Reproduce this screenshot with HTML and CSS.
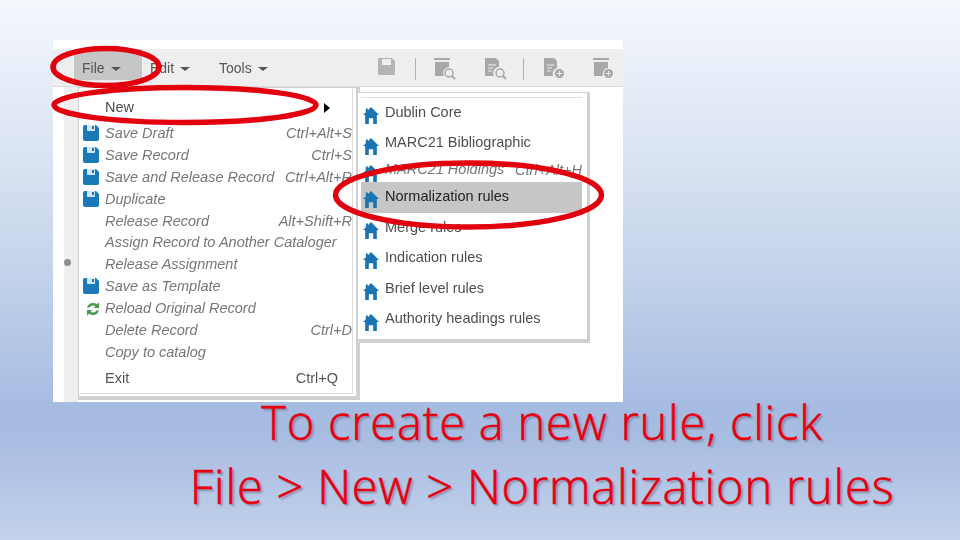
FILE: index.html
```html
<!DOCTYPE html>
<html lang="en">
<head>
<meta charset="utf-8">
<title>To create a new rule</title>
<link rel="stylesheet" href="styles.css">
</head>
<body>
<svg class="defs" width="0" height="0" aria-hidden="true">
  <symbol id="floppy" viewBox="0 0 16 16">
    <path fill="#1a7ab8" d="M2 0h11l3 3v11a2 2 0 0 1-2 2H2a2 2 0 0 1-2-2V2a2 2 0 0 1 2-2z"/>
    <path fill="#d5e6f2" d="M4 0h8v5a1 1 0 0 1-1 1H5a1 1 0 0 1-1-1z"/>
    <rect fill="#1a7ab8" x="9" y="1" width="2" height="3"/>
  </symbol>
  <symbol id="house" viewBox="0 0 17 18">
    <path fill="#1a74b2" d="M8.500 0 17 8.600h-2.300V18h-3.900v-6H6.200v6H2.300V8.600H0L3 5.600V1.500h2.200v1.900z"/>
  </symbol>
  <symbol id="reload" viewBox="0 0 16 16">
    <path fill="#4c9a50" d="M2 6.500C3 3 6 1.500 9 2c1.200.2 2 .7 2.800 1.300L14 1.500V7H8.500l2-1.800C9.700 4.600 9 4.400 8 4.500c-1.500.1-2.800 1-3.300 2z"/>
    <path fill="#4c9a50" d="M14 9.500c-1 3.500-4 5-7 4.500-1.200-.2-2-.7-2.800-1.300L2 14.500V9h5.500l-2 1.800c.8.600 1.500.8 2.500.7 1.500-.1 2.800-1 3.300-2z"/>
  </symbol>
  <symbol id="tb-save" viewBox="0 0 17 17">
    <path fill="#b4b4b4" d="M1 0h13l3 3v13a1 1 0 0 1-1 1H1a1 1 0 0 1-1-1V1a1 1 0 0 1 1-1z"/>
    <rect fill="#efefef" x="4" y="1" width="9" height="6"/>
  </symbol>
  <symbol id="tb-box" viewBox="0 0 22 22">
    <rect fill="#a8a8a8" x="0" y="0" width="16" height="2"/>
    <path fill="#a8a8a8" d="M1 4h14v5a6 6 0 0 0-5 9H1z"/>
    <circle cx="15" cy="15" r="4" fill="none" stroke="#a8a8a8" stroke-width="1.500"/>
    <path stroke="#a8a8a8" stroke-width="2" d="m18 18 3 3"/>
  </symbol>
  <symbol id="tb-doc" viewBox="0 0 22 22">
    <path fill="#a8a8a8" d="M0 0h11l3 3v6a6 6 0 0 0-5 9H0z"/>
    <path stroke="#efefef" stroke-width="1.200" d="M3 7h8M3 10h5M3 13h4"/>
    <circle cx="15" cy="15" r="4" fill="none" stroke="#a8a8a8" stroke-width="1.500"/>
    <path stroke="#a8a8a8" stroke-width="2" d="m18 18 3 3"/>
  </symbol>
  <symbol id="tb-docadd" viewBox="0 0 22 22">
    <path fill="#a8a8a8" d="M0 0h10l3 3v7a6 6 0 0 0-4 8H0z"/>
    <path stroke="#efefef" stroke-width="1.200" d="M3 7h7M3 10h5M3 13h4"/>
    <circle cx="15.500" cy="15.500" r="4.500" fill="#a8a8a8"/>
    <path stroke="#efefef" d="M13 15.500h5M15.500 13v5"/>
  </symbol>
  <symbol id="tb-boxadd" viewBox="0 0 22 22">
    <rect fill="#a8a8a8" x="0" y="0" width="16" height="2"/>
    <path fill="#a8a8a8" d="M1 4h14v6a6 6 0 0 0-5 8H1z"/>
    <circle cx="15.500" cy="15.500" r="4.500" fill="#a8a8a8"/>
    <path stroke="#efefef" d="M13 15.500h5M15.500 13v5"/>
  </symbol>
</svg>

<main class="slide">
  <section class="shot">
    <div class="shot-top"></div>
    <header class="toolbar">
      <nav class="menubar">
        <span class="menubtn menubtn-open">File <i class="caret"></i></span>
        <span class="menubtn">Edit <i class="caret"></i></span>
        <span class="menubtn">Tools <i class="caret"></i></span>
      </nav>
      <div class="tools">
        <svg class="tb tb-s"><use href="#tb-save"/></svg>
        <i class="tb-sep"></i>
        <svg class="tb tb-first"><use href="#tb-box"/></svg>
        <svg class="tb tb-last"><use href="#tb-doc"/></svg>
        <i class="tb-sep tb-sep2"></i>
        <svg class="tb tb-add"><use href="#tb-docadd"/></svg>
        <svg class="tb"><use href="#tb-boxadd"/></svg>
      </div>
    </header>
    <div class="shot-body">
      <div class="rail"></div>
      <div class="gutter"><i class="gutter-dot"></i></div>
    </div>

    <div class="menu">
      <ul class="menu-inner">
        <li class="item item-new"><span class="label">New</span><i class="arrow"></i></li>
        <li class="item off"><svg class="ico"><use href="#floppy"/></svg><span class="label">Save Draft</span><span class="key">Ctrl+Alt+S</span></li>
        <li class="item off"><svg class="ico"><use href="#floppy"/></svg><span class="label">Save Record</span><span class="key">Ctrl+S</span></li>
        <li class="item off"><svg class="ico"><use href="#floppy"/></svg><span class="label">Save and Release Record</span><span class="key">Ctrl+Alt+R</span></li>
        <li class="item off"><svg class="ico"><use href="#floppy"/></svg><span class="label">Duplicate</span></li>
        <li class="item off"><span class="label">Release Record</span><span class="key">Alt+Shift+R</span></li>
        <li class="item off"><span class="label">Assign Record to Another Cataloger</span></li>
        <li class="item off"><span class="label">Release Assignment</span></li>
        <li class="item off"><svg class="ico"><use href="#floppy"/></svg><span class="label">Save as Template</span></li>
        <li class="item off"><svg class="ico ico-r"><use href="#reload"/></svg><span class="label">Reload Original Record</span></li>
        <li class="item off"><span class="label">Delete Record</span><span class="key">Ctrl+D</span></li>
        <li class="item off"><span class="label">Copy to catalog</span></li>
        <li class="item item-exit"><span class="label">Exit</span><span class="key">Ctrl+Q</span></li>
      </ul>
    </div>

    <div class="submenu">
      <ul class="sub-inner">
        <li class="sub"><svg class="home"><use href="#house"/></svg>Dublin Core</li>
        <li class="sub"><svg class="home"><use href="#house"/></svg>MARC21 Bibliographic</li>
        <li class="sub sub-off"><svg class="home"><use href="#house"/></svg>MARC21 Holdings<span class="sub-key">Ctrl+Alt+H</span></li>
        <li class="sub sub-hl"><svg class="home"><use href="#house"/></svg>Normalization rules</li>
        <li class="sub"><svg class="home"><use href="#house"/></svg>Merge rules</li>
        <li class="sub"><svg class="home"><use href="#house"/></svg>Indication rules</li>
        <li class="sub"><svg class="home"><use href="#house"/></svg>Brief level rules</li>
        <li class="sub"><svg class="home"><use href="#house"/></svg>Authority headings rules</li>
      </ul>
    </div>
  </section>

  <h1 class="caption">To create a new rule, click<br>File &gt; New &gt; Normalization rules</h1>

  <svg class="marks" viewBox="0 0 960 540" aria-hidden="true">
    <ellipse cx="106" cy="67" rx="53" ry="18.500"/>
    <ellipse cx="185" cy="105" rx="131" ry="17.500"/>
    <ellipse cx="468.500" cy="195" rx="133" ry="32"/>
  </svg>
</main>
</body>
</html>
```
FILE: styles.css
```css
* { box-sizing: border-box; }
html, body { margin: 0; padding: 0; }
body { width: 960px; height: 540px; overflow: hidden; font-family: "Liberation Sans", Arial, sans-serif; }
.defs { position: absolute; }
ul { list-style: none; margin: 0; padding: 0; }

.slide {
  position: relative;
  width: 960px;
  height: 540px;
  padding-top: 40px;
  background: linear-gradient(180deg, #f4f7fc 0%, #e4ebf6 18%, #c4d3ea 50%, #a5bbe1 76%, #a9bde2 82%, #c3d2eb 100%);
  display: flex;
  flex-direction: column;
}

.shot {
  position: relative;
  width: 570px;
  height: 362px;
  margin: 0 0 -12px 53px;
  background: #fff;
  display: flex;
  flex-direction: column;
  filter: blur(.35px);
}
.shot-top { height: 9px; background: #fff; flex: none; }
.toolbar {
  height: 38px;
  flex: none;
  display: flex;
  align-items: flex-start;
  background: #eeeeee;
  border-bottom: 1px solid #dcdcdc;
}
.menubar { display: flex; margin-left: 21px; }
.menubtn {
  display: flex;
  align-items: center;
  height: 31px;
  padding: 7px 0 0 8px;
  width: 69px;
  font-size: 14px;
  color: #555;
}
.menubtn-open { background: #c6c6c6; width: 68px; }
.caret {
  display: inline-block;
  margin-left: 6px;
  margin-top: 1px;
  border-left: 5px solid transparent;
  border-right: 5px solid transparent;
  border-top: 4px solid #555;
}
.tools {
  display: flex;
  align-items: flex-start;
  margin-left: 98px;
  padding-top: 9px;
}
.tb { width: 22px; height: 22px; display: block; margin-right: 28px; flex: none; }
.tb-s { width: 17px; height: 17px; margin-right: 20px; }
.tb-sep { width: 1px; height: 22px; background: #b0b0b0; margin-right: 18px; flex: none; }
.tb-first { margin-right: 29px; }
.tb-last { margin-right: 16px; }
.tb-sep2 { margin-right: 20px; }
.tb-add { margin-right: 27px; }

.shot-body { flex: 1; display: flex; }
.rail { width: 11px; background: #fff; }
.gutter { position: relative; width: 14px; background: #efefef; }
.gutter-dot {
  position: absolute;
  left: 0;
  top: 172px;
  width: 7px;
  height: 7px;
  border-radius: 50%;
  background: #8c8c8c;
}

.menu {
  position: absolute;
  left: 25px;
  top: 47px;
  width: 282px;
  height: 313px;
  background: #fff;
  border: solid #d0d0d0;
  border-width: 1px 4px 4px 1px;
  padding-right: 2px;
  padding-bottom: 2px;
}
.menu-inner {
  height: 100%;
  width: 274px;
  border-right: 1px solid #dcdcdc;
  border-bottom: 1px solid #dcdcdc;
  padding-top: 8px;
  overflow: hidden;
}
.item {
  display: flex;
  align-items: center;
  height: 21.900px;
  padding-left: 26px;
  position: relative;
  font-size: 14.500px;
  white-space: nowrap;
  color: #444;
}
.item-new { height: 22px; margin-bottom: 4px; color: #4a4a4a; }
.off { color: #777; font-style: italic; }
.item-exit { margin-top: 2px; height: 26px; }
.key { position: absolute; right: 0; }
.item-exit .key { right: 14px; font-style: normal; color: #555; }
.item-exit .label { color: #555; }
.ico { position: absolute; left: 4px; top: 3px; width: 16px; height: 16px; }
.ico-r { left: 6px; top: 4px; }
.arrow {
  position: absolute;
  left: 245px;
  top: 7px;
  border-left: 6px solid #000;
  border-top: 5px solid transparent;
  border-bottom: 5px solid transparent;
}

.submenu {
  position: absolute;
  left: 304px;
  top: 52px;
  width: 233px;
  height: 251px;
  background: #fff;
  border: solid #d0d0d0;
  border-width: 1px 3px 4px 1px;
}
.sub-inner {
  margin: 4px 5px 0 3px;
  border-top: 1px solid #e2e2e2;
}
.sub {
  position: relative;
  display: flex;
  align-items: center;
  height: 30.600px;
  padding-left: 24px;
  padding-bottom: 3px;
  font-size: 14.500px;
  color: #4f4f4f;
  white-space: nowrap;
}
.sub-off { height: 23px; color: #777; font-style: italic; }
.sub-key { position: absolute; right: 0; top: 3px; }
.sub-hl { background: #c6c6c6; color: #222; }
.home { position: absolute; left: 2px; top: 9px; width: 16px; height: 17px; }
.sub-off .home { top: 6px; }

.caption {
  margin: 0;
  padding-left: 124px;
  width: 960px;
  text-align: center;
  font-family: "Open Sans", "Noto Sans", sans-serif;
  font-weight: 300;
  font-size: 47px;
  letter-spacing: .8px;
  -webkit-text-stroke: .6px #e60012;
  line-height: 64px;
  color: #e60012;
  text-shadow: 2px 2px 2px rgba(70, 70, 90, .45);
  position: relative;
}

.marks {
  position: absolute;
  left: 0;
  top: 0;
  width: 960px;
  height: 540px;
  fill: none;
  stroke: #e2000f;
  stroke-width: 5.500;
  pointer-events: none;
}
```
